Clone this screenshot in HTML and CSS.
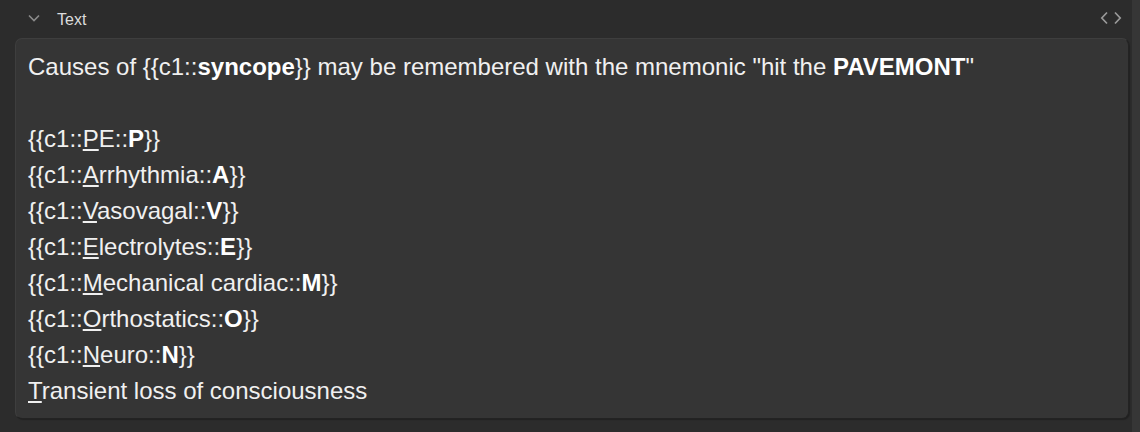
FILE: index.html
```html
<!DOCTYPE html>
<html>
<head>
<meta charset="utf-8">
<link rel="stylesheet" href="styles.css">
</head>
<body>
<div class="page">
  <div class="main">
    <div class="header">
      <svg class="chev" width="12" height="8" viewBox="0 0 12 8"><path d="M1 1.5 L6 6.5 L11 1.5" fill="none" stroke="#8a8a8a" stroke-width="1.6"/></svg>
      <span class="label">Text</span>
      <svg class="code" width="22" height="14" viewBox="0 0 22 14"><path d="M7 1.5 L1.8 7 L7 12.5 M15 1.5 L20.2 7 L15 12.5" fill="none" stroke="#9a9a9a" stroke-width="1.7"/></svg>
    </div>
    <div class="editor">
      <div>Causes of {{c1::<b>syncope</b>}} may be remembered with the mnemonic "hit the <b>PAVEMONT</b>"</div>
      <div><br></div>
      <div>{{c1::<u>P</u>E::<b>P</b>}}</div>
      <div>{{c1::<u>A</u>rrhythmia::<b>A</b>}}</div>
      <div>{{c1::<u>V</u>asovagal::<b>V</b>}}</div>
      <div>{{c1::<u>E</u>lectrolytes::<b>E</b>}}</div>
      <div>{{c1::<u>M</u>echanical cardiac::<b>M</b>}}</div>
      <div>{{c1::<u>O</u>rthostatics::<b>O</b>}}</div>
      <div>{{c1::<u>N</u>euro::<b>N</b>}}</div>
      <div><u>T</u>ransient loss of consciousness</div>
    </div>
  </div>
  <div class="scroll"></div>
</div>
</body>
</html>
```
FILE: styles.css
```css
html, body {
  margin: 0;
  padding: 0;
  background: #2c2c2c;
  height: 100%;
}
.page {
  display: flex;
  height: 432px;
  overflow: hidden;
}
.main {
  flex: 1;
  padding: 0 3px 0 15px;
}
.scroll {
  width: 8px;
  background: #363636;
}
.header {
  height: 38px;
  display: flex;
  align-items: center;
  font-family: "Liberation Sans", Arial, sans-serif;
  font-size: 16px;
  color: #dcdcdc;
}
.chev {
  margin-left: 13px;
  margin-top: -2px;
}
.label {
  margin-left: 17px;
  margin-top: 1px;
}
.code {
  margin-left: auto;
  margin-right: 7px;
  margin-top: -2px;
}
.editor {
  background: #353535;
  border: 1px solid #3e3e3e;
  border-right-color: #232323;
  border-bottom-color: #232323;
  border-radius: 7px;
  box-shadow: 1px 1px 1px rgba(0,0,0,0.25);
  padding: 10px 12px 9px 12px;
  font-family: "Liberation Sans", Arial, sans-serif;
  font-size: 24px;
  line-height: 36px;
  color: #f0f0f0;
}
.editor b { color: #ffffff; }
.editor u { text-underline-offset: 2px; }
```
